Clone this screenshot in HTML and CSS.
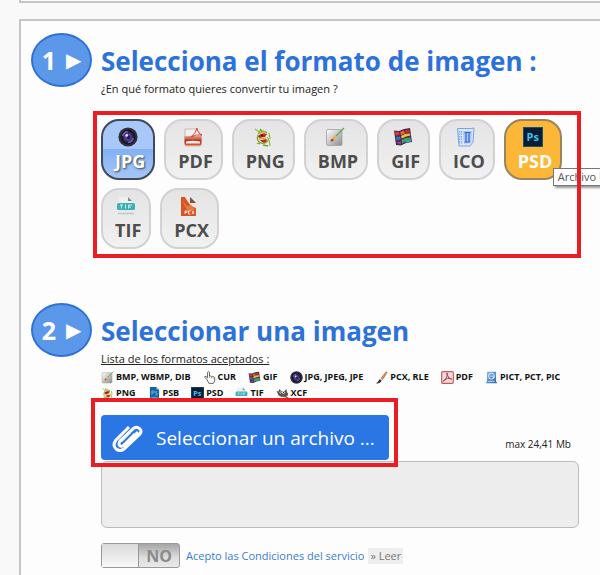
FILE: index.html
```
<!DOCTYPE html>
<html lang="es">
<head>
  <meta charset="UTF-8">
  <meta name="viewport" content="width=device-width, initial-scale=1.0">
  <title>Convertir una imagen</title>
  <link rel="stylesheet" href="styles.css">
</head>
<body>
  <!-- icon set -->
  <svg class="defs" aria-hidden="true">
    <linearGradient id="g-gray" x1="0" y1="0" x2="1" y2="1"><stop offset="0" stop-color="#fff"/><stop offset="1" stop-color="#8c8c8c"/></linearGradient>
    <linearGradient id="g-red" x1="0" y1="0" x2="0" y2="1"><stop offset="0" stop-color="#e9a08c"/><stop offset=".5" stop-color="#b8321c"/><stop offset="1" stop-color="#e25a20"/></linearGradient>
    <linearGradient id="g-pict" x1="0" y1="0" x2="1" y2="1"><stop offset="0" stop-color="#8fc1ea"/><stop offset="1" stop-color="#24609f"/></linearGradient>
    <radialGradient id="g-lens"><stop offset="0" stop-color="#b9a4ef"/><stop offset=".4" stop-color="#5f43b4"/><stop offset=".75" stop-color="#2d2450"/><stop offset="1" stop-color="#1c1a2c"/></radialGradient>
    <symbol id="i-jpg" viewBox="0 0 20 20">
      <circle cx="10" cy="10" r="9.6" fill="#303038"/>
      <circle cx="10" cy="10" r="7.4" fill="#171522"/>
      <circle cx="10" cy="10" r="6.2" fill="url(#g-lens)"/>
      <path d="M4.8 9a5.3 5.3 0 0 1 5-4.3M15.2 11a5.3 5.3 0 0 1-5 4.3" fill="none" stroke="#7060cf" stroke-width="1.4"/>
      <circle cx="10.4" cy="10.2" r="2" fill="#241b3d"/>
      <circle cx="8.7" cy="8.4" r="1.3" fill="#e9e4ff"/>
    </symbol>
    <symbol id="i-pdf" viewBox="0 0 20 20">
      <path d="M2 2h11l5 5v11q0 1-1 1H3q-1 0-1-1z" fill="#f3efec" stroke="#b9a8a0" stroke-width=".7"/>
      <path d="M1.5 9h17v7q0 2.500-2.500 2.500H4q-2.500 0-2.500-2.500z" fill="url(#g-red)"/>
      <path d="M3 14.500q7-1.500 14 0v2H3z" fill="#f0f0f0"/>
      <path d="M8 10q5-4 6-9 1 6 5 7-6-1-11 2z" fill="none" stroke="#e0412c" stroke-width="1"/>
    </symbol>
    <symbol id="i-png" viewBox="0 0 20 20">
      <path d="M2 2l4 3 2-2M14 10l2 3 1 6M16 6l1 6" fill="none" stroke="#8fc043" stroke-width="1.300"/>
      <path d="M5 7q5-5 9-1M5 8q-2 6 3 8 5 1 7-3" fill="none" stroke="#87ae32" stroke-width="1.500"/>
      <path d="M5 9q4-4 9-2l-2 3-6 1zM7 13l7-1-1 3q-3 2-6-2z" fill="#bd2c24"/>
      <path d="M7 6l5-1M6 12l7-1" stroke="#e3b541" stroke-width="1.400"/>
      <path d="M7 2l2 2M4 16l3 1M10 18l5 1" stroke="#6ca52a" stroke-width="1.300"/>
      <circle cx="9" cy="8.500" r="1" fill="#222"/>
    </symbol>
    <symbol id="i-bmp" viewBox="0 0 20 20">
      <rect x="1.5" y="2.5" width="15.5" height="16" rx="1.5" fill="url(#g-gray)" stroke="#999" stroke-width=".7"/>
      <path d="M10 10l9-9" stroke="#5ca553" stroke-width="1.300"/>
      <path d="M8 12l3-3" stroke="#e7b532" stroke-width="2"/>
      <path d="M5.500 14.500q0-2.500 2-3l1.500 1.500q-1 2-3.500 1.500z" fill="#c13e1c"/>
    </symbol>
    <symbol id="i-gif" viewBox="0 0 20 20">
      <path d="M1 3.500l5 .5 5-2 6-1 2 14-6 1-5 2.500-5-.5z" fill="#4b2c50"/>
      <path d="M2 4.500l4 .5.5 3-4 .5z" fill="#d63b2b"/>
      <path d="M7 5l4-1.500 1 3-4 1.500z" fill="#e8642c"/>
      <path d="M12 3.500l4-1 .7 3-4 1z" fill="#d0272f"/>
      <path d="M3 10l4-.5.5 3-4 .5z" fill="#2b78c8"/>
      <path d="M8 9l4-2 5-.5.3 2-4 1-4.500 2z" fill="#f1c12f"/>
      <path d="M8.500 13l4-2 5-.5.500 3-5 1-4 2z" fill="#3e9f6b"/>
      <path d="M4 14.500l4 .5v2l-3.500-.5z" fill="#a63aa0"/>
      <path d="M13 14l5-1v1.500l-5 1z" fill="#2bb2d2"/>
    </symbol>
    <symbol id="i-ico" viewBox="0 0 20 20">
      <path d="M1.500 1.500h14l2.500-.5-1 14-3 4H3z" fill="#dce7fb" stroke="#79a2e5" stroke-width="1"/>
      <path d="M3.500 4v13M5.500 4v13" stroke="#7da6eb" stroke-width="1.200" stroke-dasharray="1.500 1"/>
      <path d="M7 4h9l-1 12-7 1z" fill="#a9c6f5"/>
      <path d="M8.500 5.500h6M8.500 15h5.500M10 6v9M13 6v9" stroke="#3868c8" stroke-width="1.200"/>
    </symbol>
    <symbol id="i-psd" viewBox="0 0 20 20">
      <rect width="20" height="20" fill="#071d35"/>
      <rect x=".5" y=".5" width="19" height="19" fill="none" stroke="#14517c"/>
      <text x="3.500" y="14" class="ps">Ps</text>
    </symbol>
    <symbol id="i-tif" viewBox="0 0 20 20">
      <path d="M3 7V1h9l4 4v2z" fill="#efefef"/>
      <path d="M12 1v4h4z" fill="#85898b"/>
      <rect x="1" y="7" width="18" height="7" rx="1.500" fill="#3cafb9"/>
      <path d="M4 9h3M5.500 9v3.500M9.500 8.500v4M12.500 12.500V9H16M12.500 11H15" fill="none" stroke="#caf0f1" stroke-width="1"/>
      <path d="M2 17.500h16" stroke="#c1c6c8" stroke-width="1.500"/>
    </symbol>
    <symbol id="i-pcx" viewBox="0 0 20 20">
      <path d="M2 1h9l6 6v13H2z" fill="#d55523"/>
      <path d="M6 1h5l6 6v5q-6-1-11-11z" fill="#f1e7df"/>
      <path d="M11 1l6 6h-6z" fill="#6e5648"/>
      <path d="M3 4l5 6 4-1 4 5-7 2z" fill="#e87c3e"/>
      <path d="M6 18v-3h2v1.500H6M11.500 15H9.500v3h2M13 15l2 3M15 15l-2 3" fill="none" stroke="#fff" stroke-width=".8"/>
    </symbol>
    <symbol id="i-cur" viewBox="0 0 20 20">
      <path d="M6 13L2.500 9.500q0-2 2-1L7 10.500V2q1.500-2 3 0v6q1.500-1 3 .5 1.500-1 2.500.5 2-.5 2.500 1v5l-2 4H9z" fill="#fff" stroke="#555" stroke-width="1.400"/>
      <path d="M10 8v3M13 9v2.500M15.500 10v2" stroke="#777"/>
    </symbol>
    <symbol id="i-brush" viewBox="0 0 20 20">
      <path d="M9 11L17 1l2 1-7 11z" fill="#d7884f" stroke="#9e572d" stroke-width=".6"/>
      <path d="M8.500 11l3.500 2-1.500 2-3.500-2z" fill="#ccc"/>
      <path d="M7 12.500l3.500 2.500q-3 5-9 4 3-1.500 5.500-6.500z" fill="#333"/>
    </symbol>
    <symbol id="i-acrobat" viewBox="0 0 20 20">
      <rect x="1" y="1" width="18" height="18" rx="2" fill="#f6dcdc" stroke="#c15a60" stroke-width="1.800"/>
      <path d="M9 3q2 0 1 3.500 1 5 6 6.500 1-2.500-6-1.500-6 1.500-6.500 4.500 3 0 6-8.500Q8.500 4.500 9 3z" fill="none" stroke="#b33a44" stroke-width="1.500"/>
    </symbol>
    <symbol id="i-pict" viewBox="0 0 20 20">
      <path d="M3 1h14v15l2 3H1l2-3z" fill="url(#g-pict)"/>
      <circle cx="10" cy="8" r="4.500" fill="none" stroke="#e4f2ff" stroke-width="1.500"/>
      <path d="M8 8h5v4M5 16h10" stroke="#d4eaff" stroke-width="1.300" fill="none"/>
    </symbol>
    <symbol id="i-psb" viewBox="0 0 20 20">
      <path d="M3 0h10l4 4v16H3z" fill="#1263a6"/>
      <path d="M13 0v4h4z" fill="#a2cbea"/>
      <path d="M6 12V6h3q2 2 0 3H6M14 7h-2v2.500h2V12h-3M5 16h10" fill="none" stroke="#72bbec" stroke-width="1.300"/>
    </symbol>
    <symbol id="i-xcf" viewBox="0 0 20 20">
      <path d="M1 6l3 1 1-4 4 4q5 0 7-4l1 5q3 2 1 5-3 4-8 2-6 1-9-9z" fill="#55534e"/>
      <circle cx="7" cy="8.500" r="1.600" fill="#fff"/><circle cx="11.500" cy="8.500" r="1.900" fill="#fff"/>
      <circle cx="7.300" cy="8.500" r=".7"/><circle cx="11.500" cy="8.500" r=".8"/>
      <path d="M12 14l7 3" stroke="#8b6d45" stroke-width="2"/>
    </symbol>
  </svg>

  <div class="panel-prev"></div>

  <main class="panel">
    <section class="step">
      <div class="step-number">1 <span class="arrow">▶</span></div>
      <div class="step-body">
        <h2>Selecciona el formato de imagen :</h2>
        <p class="hint">¿En qué formato quieres convertir tu imagen ?</p>
        <div class="formats marked">
          <button type="button" class="format selected"><svg><use href="#i-jpg"/></svg><span>JPG</span></button>
          <button type="button" class="format"><svg><use href="#i-pdf"/></svg><span>PDF</span></button>
          <button type="button" class="format"><svg><use href="#i-png"/></svg><span>PNG</span></button>
          <button type="button" class="format"><svg><use href="#i-bmp"/></svg><span>BMP</span></button>
          <button type="button" class="format"><svg><use href="#i-gif"/></svg><span>GIF</span></button>
          <button type="button" class="format"><svg><use href="#i-ico"/></svg><span>ICO</span></button>
          <div class="format-tip">
            <button type="button" class="format hover"><svg><use href="#i-psd"/></svg><span>PSD</span></button>
            <div class="tooltip" role="tooltip">Archivo PSD</div>
          </div>
          <button type="button" class="format"><svg><use href="#i-tif"/></svg><span>TIF</span></button>
          <button type="button" class="format"><svg><use href="#i-pcx"/></svg><span>PCX</span></button>
        </div>
      </div>
    </section>

    <section class="step">
      <div class="step-number">2 <span class="arrow">▶</span></div>
      <div class="step-body">
        <h2>Seleccionar una imagen</h2>
        <p class="hint underline">Lista de los formatos aceptados :</p>
        <ul class="accepted">
          <li><svg><use href="#i-bmp"/></svg>BMP, WBMP, DIB</li>
          <li><svg><use href="#i-cur"/></svg>CUR</li>
          <li><svg><use href="#i-gif"/></svg>GIF</li>
          <li><svg><use href="#i-jpg"/></svg>JPG, JPEG, JPE</li>
          <li><svg><use href="#i-brush"/></svg>PCX, RLE</li>
          <li><svg><use href="#i-acrobat"/></svg>PDF</li>
          <li><svg><use href="#i-pict"/></svg>PICT, PCT, PIC</li>
          <li><svg><use href="#i-png"/></svg>PNG</li>
          <li><svg><use href="#i-psb"/></svg>PSB</li>
          <li><svg><use href="#i-psd"/></svg>PSD</li>
          <li><svg><use href="#i-tif"/></svg>TIF</li>
          <li><svg><use href="#i-xcf"/></svg>XCF</li>
        </ul>
        <div class="upload">
          <div class="marked file">
            <button type="button" class="file-button">
              <svg viewBox="0 0 32 32"><path d="M17 5L4 18q-4 5 0 9 4 3 8 0L28 12q2-3 0-5-3-3-6-1L8 19q-2 3 0 5 2 1 4-1l11-11M18 10l-9 9M13 23L26 10" /></svg>
              Seleccionar un archivo ...
            </button>
          </div>
          <span class="max">max 24,41 Mb</span>
        </div>
        <div class="drop"></div>
        <div class="terms">
          <label class="switch">
            <input type="checkbox" aria-label="Acepto las Condiciones del servicio">
            <span class="knob"></span>
            <span class="state">NO</span>
          </label>
          <a href="#">Acepto las Condiciones del servicio</a>
          <a href="#" class="read">» Leer</a>
        </div>
      </div>
    </section>
  </main>
</body>
</html>
```
FILE: styles.css
```
* { box-sizing: border-box; }
body {
  margin: 0;
  background: #f9f9f9;
  color: #222;
  font-family: "Open Sans", "Noto Sans", sans-serif;
  font-size: 11px;
  overflow-x: hidden;
}
.defs { position: absolute; width: 0; height: 0; }
.ps { font: bold 11px "Open Sans", sans-serif; fill: #3cc5ef; }

.panel-prev {
  height: 3px;
  margin-left: 19px;
  background: #fdfdfd;
  border: solid #c6c6c6;
  border-width: 0 0 2px 2px;
}
.panel {
  margin: 16px 0 0 19px;
  padding: 12px 21px 7px 10px;
  background: #fdfdfd;
  border: solid #c6c6c6;
  border-width: 2px 0 0 2px;
}

.step { display: flex; gap: 9px; }
.step + .step { margin-top: 54px; }
.step-number {
  display: flex;
  flex: none;
  align-items: center;
  justify-content: center;
  gap: 10px;
  width: 61px;
  height: 54px;
  border: 2px solid #2f72d6;
  border-radius: 50%;
  background: #5c98ea;
  color: #fff;
  font-size: 25px;
  font-weight: bold;
}
.arrow { font-family: "DejaVu Sans", sans-serif; font-size: 20px; font-weight: normal; }
.step-body { flex: 1; min-width: 0; }
h2 {
  margin: 10px 0 0;
  color: #2c72d9;
  font-size: 26px;
  line-height: 36px;
  white-space: nowrap;
}
.hint { margin: 2px 0 0; line-height: 16px; }
.underline { text-decoration: underline; }

/* red frame over a group */
.marked { position: relative; }
.marked::after {
  content: "";
  position: absolute;
  inset: -8px -2px -9px -8px;
  border: 4px solid #ea1c24;
  pointer-events: none;
}

.formats { display: flex; flex-wrap: wrap; gap: 8px 9px; margin-top: 22px; }
.format {
  display: flex;
  flex-direction: column;
  align-items: center;
  height: 61px;
  padding: 6px 8px 0 7px;
  border: 2px solid #d2d2d2;
  border-radius: 18px;
  background: linear-gradient(#e4e4e4, #f1f1f1);
  color: #4d4d4d;
  font: bold 18px/24px "Open Sans", "Noto Sans", sans-serif;
  cursor: pointer;
}
.format svg { width: 20px; height: 20px; }
.format span { margin-top: 2px; padding-left: 5px; }
.format.selected {
  border-color: #3f4a5a;
  background: linear-gradient(#a9c8fa 50%, #83b1f5 50%, #a4c6f9);
  color: #fff;
  text-shadow: 1px 1px 2px #444;
}
.format.hover { border-color: #98855f; background: #fcb738; color: #fff; }
.format-tip { position: relative; }
.tooltip {
  position: absolute;
  left: 49px;
  top: 49px;
  padding: 0 4px;
  border: 1px solid #777;
  background: #fff;
  box-shadow: 2px 2px 2px #999;
  color: #555;
  line-height: 16px;
  white-space: nowrap;
}

.accepted {
  display: flex;
  flex-wrap: wrap;
  column-gap: 12px;
  margin: 2px 0 0;
  padding: 0;
  list-style: none;
  color: #111;
  font-size: 9px;
  font-weight: bold;
  line-height: 16px;
}
.accepted li { display: flex; align-items: center; gap: 2px; }
.accepted svg { width: 13px; height: 13px; }

.upload {
  display: flex;
  align-items: center;
  justify-content: space-between;
  margin-top: 14px;
  padding-right: 8px;
}
.file::after { inset: -17px -9px -7px -10px; }
.file-button {
  display: flex;
  align-items: center;
  gap: 12px;
  height: 45px;
  padding: 0 14px 0 11px;
  border: 0;
  border-radius: 4px;
  background: #2a76e5;
  color: #fff;
  font: 19px "Open Sans", "Noto Sans", sans-serif;
  cursor: pointer;
}
.file-button svg {
  width: 32px;
  height: 32px;
  fill: none;
  stroke: #fff;
  stroke-width: 3;
}
.max { margin-top: 12px; font-size: 10px; }
.drop {
  height: 67px;
  margin-top: 1px;
  border: 1px solid #bcbcbc;
  border-radius: 6px;
  background: #ededed;
}

.terms { display: flex; align-items: center; gap: 4px; margin-top: 15px; }
.terms a { color: #3c7cd4; line-height: 16px; text-decoration: none; }
.terms .read { padding: 0 2px; background: #eee; color: #777; }
.switch {
  position: relative;
  display: flex;
  width: 79px;
  height: 25px;
  margin-right: 2px;
  border: 1px solid #999;
  border-radius: 3px;
  background: linear-gradient(#a5a5a5, #dedede 60%, #e8e8e8);
  cursor: pointer;
}
.switch input { position: absolute; opacity: 0; }
.knob {
  width: 37px;
  border-right: 1px solid #999;
  background: linear-gradient(#dadada, #f8f8f8);
}
.state {
  flex: 1;
  color: #8b8b8b;
  font-size: 16px;
  font-weight: bold;
  line-height: 24px;
  text-align: center;
}
```
